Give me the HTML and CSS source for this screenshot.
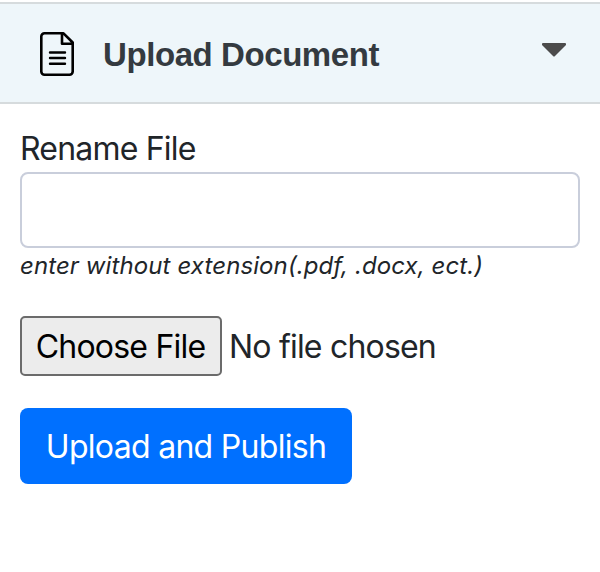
FILE: index.html
```html
<!DOCTYPE html>
<html lang="en">
<head>
<meta charset="utf-8">
<title>Upload Document</title>
<link rel="stylesheet" href="styles.css">
</head>
<body>
<header class="panel-header">
  <svg class="doc-icon" width="34" height="44" viewBox="0 0 34 44" fill="none" stroke="#000" stroke-width="2.6" stroke-linejoin="round">
    <path d="M23 1.300H4.500A3.200 3.200 0 0 0 1.300 4.500v35A3.200 3.200 0 0 0 4.500 42.700h25a3.200 3.200 0 0 0 3.200-3.200V10.500L23.500 1.300H22v10.400h10.700"/>
    <path d="M10 20.500h15M10 26h15M10 31.700h15" stroke-width="2.400" stroke-linecap="round"/>
  </svg>
  <h1 class="title">Upload Document</h1>
  <svg class="caret" width="24" height="14" viewBox="0 0 24 14"><path d="M1 0h22q1 0 1 1v1L13 13q-1 1-2 0L0 2V1q0-1 1-1z" fill="#4b4b4b"/></svg>
</header>
<form class="form">
  <label class="label" for="name">Rename File</label>
  <input class="text-input" id="name" type="text">
  <em class="hint">enter without extension(.pdf, .docx, ect.)</em>
  <div class="file-row">
    <button class="choose" type="button">Choose File</button>
    <span class="file-name">No file chosen</span>
  </div>
  <button class="submit" type="button">Upload and Publish</button>
</form>
</body>
</html>
```
FILE: styles.css
```css
* { box-sizing: border-box; }
body { margin: 0; padding-top: 2px; background: #fff; color: #212529; font-family: Inter, sans-serif; font-size: 32px; letter-spacing: -0.8px; }
.panel-header { display: flex; align-items: center; height: 102px; padding: 0 34px 0 40px; background: #eef6fa; border-top: 2px solid #d6dbdd; border-bottom: 2px solid #d6dbdd; }
.doc-icon { flex: none; margin-top: 2px; }
.title { margin: 4px 0 0 29px; font-family: "Liberation Sans", sans-serif; font-size: 33px; line-height: 40px; font-weight: 700; letter-spacing: -0.42px; color: #343a40; }
.caret { margin-left: auto; margin-top: -6px; }
.form { display: flex; flex-direction: column; align-items: flex-start; padding: 25px 20px; }
.label { line-height: 40px; }
.text-input { width: 560px; height: 76px; margin-top: 3px; border: 2px solid #c9cedb; border-radius: 8px; background: #fff; }
.hint { font-size: 24px; line-height: 36px; letter-spacing: 0.1px; }
.file-row { display: flex; align-items: center; gap: 7px; margin-top: 32px; }
.choose { width: 202px; height: 60px; padding: 0 1px 0 0; border: 2px solid #6b6b6b; border-radius: 5px; background: #ececec; color: #000; font: 32px Inter, sans-serif; letter-spacing: -0.8px; }
.submit { width: 332px; height: 76px; margin-top: 32px; padding: 0; border: 0; border-radius: 8px; background: #0070ff; color: #fff; font: 32px Inter, sans-serif; letter-spacing: -0.7px; }
.title, .label, .hint, .file-name, .choose, .submit { white-space: nowrap; }
```
